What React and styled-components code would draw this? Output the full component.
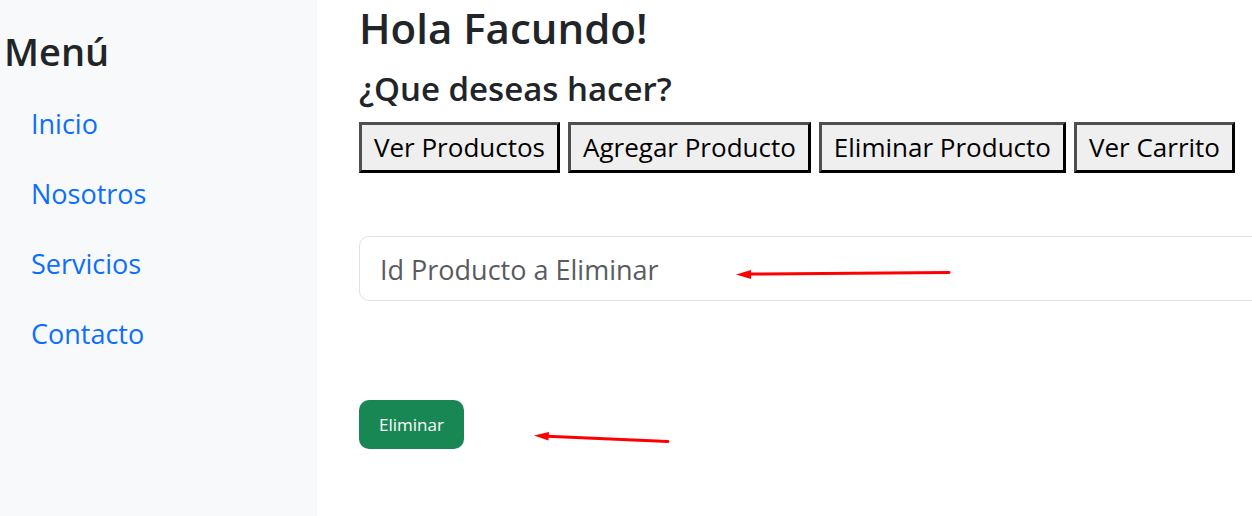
import React from "react";
import styled, { createGlobalStyle } from "styled-components";

const GlobalStyle = createGlobalStyle`
  *, *::before, *::after { box-sizing: border-box; }
  body {
    margin: 0;
    overflow-x: hidden;
    background: #fff;
    color: #212529;
    font-family: "Segoe UI", "Open Sans", "Noto Sans", sans-serif;
    font-size: 27px;
    line-height: 42px;
  }
`;

const Page = styled.div`
  display: grid;
  grid-template-columns: 317px minmax(0, 1fr);
  min-height: 100vh;
`;

const Sidebar = styled.aside`
  padding: 27px 4px;
  background: #f8f9fa;
`;

const Heading = styled.h2`
  margin: 0;
  font-size: ${(p) => p.$size}px;
  line-height: ${(p) => p.$line}px;
  font-weight: 600;
`;

const Nav = styled.nav`
  display: flex;
  flex-direction: column;
  margin-top: 14px;
`;

const NavLink = styled.a`
  padding: 14px 27px;
  color: #0d6efd;
  text-decoration: none;
`;

const Main = styled.main`
  padding-left: 42px;
`;

const Titles = styled.header`
  display: flex;
  flex-direction: column;
  gap: 10px;
`;

const Actions = styled.div`
  display: flex;
  gap: 8px;
  margin-top: 10px;
`;

const ActionButton = styled.button`
  flex: none;
  padding: 0 12px;
  border: 3px solid;
  border-color: #4f4f4f #000 #000 #4f4f4f;
  background: #efefef;
  color: #000;
  font: inherit;
  font-size: 26px;
  line-height: 45px;
  white-space: nowrap;
`;

const FieldRow = styled.div`
  position: relative;
  margin: 63px -24px 0 0;
`;

const Field = styled.input`
  display: block;
  width: 100%;
  height: 65px;
  padding: 2px 20px 0;
  border: 1px solid #dee2e6;
  border-radius: 10px;
  background: #fff;
  color: #212529;
  font: inherit;
  &::placeholder { color: #595c5f; opacity: 1; }
`;

const SubmitRow = styled.div`
  position: relative;
  display: flex;
  margin-top: 99px;
`;

const SubmitButton = styled.button`
  padding: 0 20px;
  border: 0;
  border-radius: 10px;
  background: #198754;
  color: #fff;
  font: inherit;
  font-size: 17px;
  line-height: 49px;
`;

const Arrow = styled.svg`
  position: absolute;
  left: ${(p) => p.$left}px;
  top: ${(p) => p.$top}px;
  pointer-events: none;
`;

const links = ["Inicio", "Nosotros", "Servicios", "Contacto"];
const actions = ["Ver Productos", "Agregar Producto", "Eliminar Producto", "Ver Carrito"];

export default function App() {
  return (
    <>
      <GlobalStyle />
      <Page>
        <Sidebar>
          <Heading $size={38} $line={48}>Menú</Heading>
          <Nav>
            {links.map((label) => (
              <NavLink key={label} href="#">{label}</NavLink>
            ))}
          </Nav>
        </Sidebar>
        <Main>
          <Titles>
            <Heading as="h1" $size={42} $line={56}>Hola Facundo!</Heading>
            <Heading as="h3" $size={33} $line={46}>¿Que deseas hacer?</Heading>
          </Titles>
          <Actions>
            {actions.map((label) => (
              <ActionButton key={label} type="button">{label}</ActionButton>
            ))}
          </Actions>
          <FieldRow>
            <Field type="text" aria-label="Id Producto a Eliminar" placeholder="Id Producto a Eliminar" />
            <Arrow $left={377} $top={33} width="216" height="12" aria-hidden="true">
              <path d="M14 5 L213 3.5" stroke="#f00" strokeWidth="3" strokeLinecap="round" />
              <path d="M0 5.5 L15 1 V10 Z" fill="#f00" />
            </Arrow>
          </FieldRow>
          <SubmitRow>
            <SubmitButton type="button">Eliminar</SubmitButton>
            <Arrow $left={175} $top={31} width="137" height="14" aria-hidden="true">
              <path d="M13 5.3 L134 10.5" stroke="#f00" strokeWidth="3" strokeLinecap="round" />
              <path d="M0 4.5 L15 1 L14.5 9.5 Z" fill="#f00" />
            </Arrow>
          </SubmitRow>
        </Main>
      </Page>
    </>
  );
}
